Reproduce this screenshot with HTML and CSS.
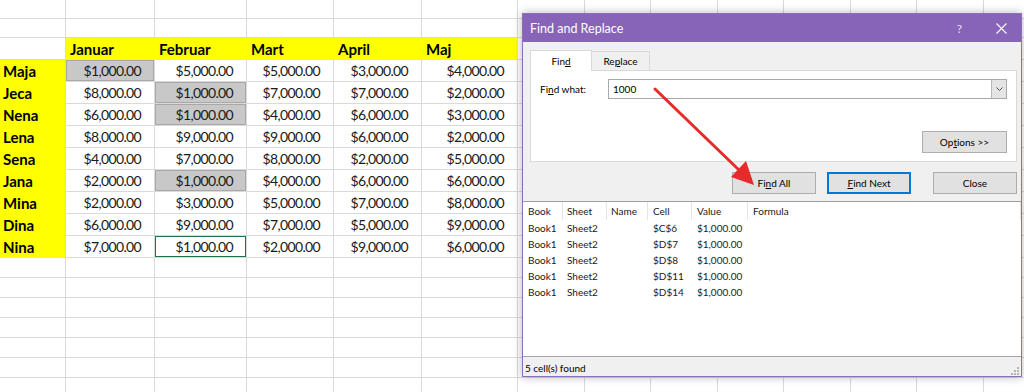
FILE: index.html
```html
<!DOCTYPE html>
<html>
<head>
<meta charset="utf-8">
<title>Find and Replace</title>
<link rel="stylesheet" href="styles.css">
</head>
<body>
<div class="sheet">
<table class="grid">
<colgroup>
<col class="c-a"><col class="c-b"><col class="c-c"><col class="c-d"><col class="c-e"><col class="c-f">
<col class="c-x"><col class="c-x"><col class="c-x"><col class="c-x"><col class="c-x"><col class="c-x"><col class="c-x"><col class="c-x">
</colgroup>
<tr class="r-top"><td></td><td></td><td></td><td></td><td></td><td></td><td></td><td></td><td></td><td></td><td></td><td></td><td></td><td></td></tr>
<tr class="r-top"><td></td><td></td><td></td><td></td><td></td><td></td><td></td><td></td><td></td><td></td><td></td><td></td><td></td><td></td></tr>
<tr class="r-data"><td></td><td class="head">Januar</td><td class="head">Februar</td><td class="head">Mart</td><td class="head">April</td><td class="head">Maj</td><td></td><td></td><td></td><td></td><td></td><td></td><td></td><td></td></tr>
<tr class="r-data"><td class="name">Maja</td><td class="val found">$1,000.00</td><td class="val">$5,000.00</td><td class="val">$5,000.00</td><td class="val">$3,000.00</td><td class="val">$4,000.00</td><td></td><td></td><td></td><td></td><td></td><td></td><td></td><td></td></tr>
<tr class="r-data"><td class="name">Jeca</td><td class="val">$8,000.00</td><td class="val found">$1,000.00</td><td class="val">$7,000.00</td><td class="val">$7,000.00</td><td class="val">$2,000.00</td><td></td><td></td><td></td><td></td><td></td><td></td><td></td><td></td></tr>
<tr class="r-data"><td class="name">Nena</td><td class="val">$6,000.00</td><td class="val found">$1,000.00</td><td class="val">$4,000.00</td><td class="val">$6,000.00</td><td class="val">$3,000.00</td><td></td><td></td><td></td><td></td><td></td><td></td><td></td><td></td></tr>
<tr class="r-data"><td class="name">Lena</td><td class="val">$8,000.00</td><td class="val">$9,000.00</td><td class="val">$9,000.00</td><td class="val">$6,000.00</td><td class="val">$2,000.00</td><td></td><td></td><td></td><td></td><td></td><td></td><td></td><td></td></tr>
<tr class="r-data"><td class="name">Sena</td><td class="val">$4,000.00</td><td class="val">$7,000.00</td><td class="val">$8,000.00</td><td class="val">$2,000.00</td><td class="val">$5,000.00</td><td></td><td></td><td></td><td></td><td></td><td></td><td></td><td></td></tr>
<tr class="r-data"><td class="name">Jana</td><td class="val">$2,000.00</td><td class="val found">$1,000.00</td><td class="val">$4,000.00</td><td class="val">$6,000.00</td><td class="val">$6,000.00</td><td></td><td></td><td></td><td></td><td></td><td></td><td></td><td></td></tr>
<tr class="r-data"><td class="name">Mina</td><td class="val">$2,000.00</td><td class="val">$3,000.00</td><td class="val">$5,000.00</td><td class="val">$7,000.00</td><td class="val">$8,000.00</td><td></td><td></td><td></td><td></td><td></td><td></td><td></td><td></td></tr>
<tr class="r-data"><td class="name">Dina</td><td class="val">$6,000.00</td><td class="val">$9,000.00</td><td class="val">$7,000.00</td><td class="val">$5,000.00</td><td class="val">$9,000.00</td><td></td><td></td><td></td><td></td><td></td><td></td><td></td><td></td></tr>
<tr class="r-data"><td class="name">Nina</td><td class="val">$7,000.00</td><td class="val active">$1,000.00</td><td class="val">$2,000.00</td><td class="val">$9,000.00</td><td class="val">$6,000.00</td><td></td><td></td><td></td><td></td><td></td><td></td><td></td><td></td></tr>
<tr class="r-empty"><td></td><td></td><td></td><td></td><td></td><td></td><td></td><td></td><td></td><td></td><td></td><td></td><td></td><td></td></tr>
<tr class="r-empty"><td></td><td></td><td></td><td></td><td></td><td></td><td></td><td></td><td></td><td></td><td></td><td></td><td></td><td></td></tr>
<tr class="r-empty"><td></td><td></td><td></td><td></td><td></td><td></td><td></td><td></td><td></td><td></td><td></td><td></td><td></td><td></td></tr>
<tr class="r-empty"><td></td><td></td><td></td><td></td><td></td><td></td><td></td><td></td><td></td><td></td><td></td><td></td><td></td><td></td></tr>
<tr class="r-empty"><td></td><td></td><td></td><td></td><td></td><td></td><td></td><td></td><td></td><td></td><td></td><td></td><td></td><td></td></tr>
<tr class="r-empty"><td></td><td></td><td></td><td></td><td></td><td></td><td></td><td></td><td></td><td></td><td></td><td></td><td></td><td></td></tr>
<tr class="r-empty"><td></td><td></td><td></td><td></td><td></td><td></td><td></td><td></td><td></td><td></td><td></td><td></td><td></td><td></td></tr>
</table>
</div>

<div class="dialog">
  <div class="titlebar">
    <span class="title">Find and Replace</span>
    <span class="cap-btn help">?</span>
    <span class="cap-btn close"><svg width="11" height="11" viewBox="0 0 11 11"><path d="M0.5 0.5 L10.5 10.5 M10.5 0.5 L0.5 10.5" stroke="#fff" stroke-width="1.1" fill="none"/></svg></span>
  </div>
  <div class="body">
    <div class="tabs">
      <div class="tab active">Fin<u>d</u></div>
      <div class="tab">Re<u>p</u>lace</div>
    </div>
    <div class="panel">
      <div class="field-row">
        <span class="label">Fi<u>n</u>d what:</span>
        <div class="combo">
          <span class="combo-text">1000</span>
          <span class="drop"><svg width="7" height="4" viewBox="0 0 7 4"><path d="M0.5 0.5 L3.5 3.5 L6.5 0.5" stroke="#555" stroke-width="1" fill="none"/></svg></span>
        </div>
      </div>
      <div class="options-row">
        <span class="btn options">Op<u>t</u>ions &gt;&gt;</span>
      </div>
    </div>
    <div class="actions">
      <span class="btn">Fi<u>n</u>d All</span>
      <span class="btn focused"><u>F</u>ind Next</span>
      <span class="btn close-btn">Close</span>
    </div>
  </div>
  <div class="results">
    <div class="rrow rhead">
      <span>Book</span><span>Sheet</span><span>Name</span><span>Cell</span><span>Value</span><span>Formula</span>
    </div>
    <div class="rrow"><span>Book1</span><span>Sheet2</span><span></span><span>$C$6</span><span>$1,000.00</span><span></span></div>
    <div class="rrow"><span>Book1</span><span>Sheet2</span><span></span><span>$D$7</span><span>$1,000.00</span><span></span></div>
    <div class="rrow"><span>Book1</span><span>Sheet2</span><span></span><span>$D$8</span><span>$1,000.00</span><span></span></div>
    <div class="rrow"><span>Book1</span><span>Sheet2</span><span></span><span>$D$11</span><span>$1,000.00</span><span></span></div>
    <div class="rrow"><span>Book1</span><span>Sheet2</span><span></span><span>$D$14</span><span>$1,000.00</span><span></span></div>
  </div>
  <div class="status">
    <span>5 cell(s) found</span>
    <svg class="grip" width="9" height="9" viewBox="0 0 9 9"><g fill="#b5b5b5"><rect x="7" y="1" width="2" height="2"/><rect x="4" y="4" width="2" height="2"/><rect x="7" y="4" width="2" height="2"/><rect x="1" y="7" width="2" height="2"/><rect x="4" y="7" width="2" height="2"/><rect x="7" y="7" width="2" height="2"/></g></svg>
  </div>
</div>

<svg class="arrow" width="1024" height="392" viewBox="0 0 1024 392">
  <line x1="655" y1="89" x2="739" y2="170" stroke="#e52b2b" stroke-width="3" stroke-linecap="round"/>
  <polygon points="754,185 731,177 746,161" fill="#e52b2b"/>
</svg>
</body>
</html>
```

FILE: styles.css
```css
html, body {
  margin: 0;
  padding: 0;
}
body {
  width: 1024px;
  height: 392px;
  overflow: hidden;
  position: relative;
  background: #ffffff;
  font-family: Lato, "Liberation Sans", sans-serif;
}

/* ---------- spreadsheet ---------- */
.sheet {
  width: 1024px;
  height: 392px;
  overflow: hidden;
}
.grid {
  border-collapse: separate;
  border-spacing: 0;
  table-layout: fixed;
  width: 1050px;
}
.c-a { width: 66px; }
.c-b { width: 89px; }
.c-c { width: 92px; }
.c-d { width: 87px; }
.c-e { width: 88px; }
.c-f { width: 96px; }
.c-x { width: 66.5px; }

.grid td {
  box-sizing: border-box;
  padding: 0;
  border-right: 1px solid #dadada;
  border-bottom: 1px solid #dadada;
  white-space: nowrap;
  overflow: hidden;
  vertical-align: middle;
}
.r-top { height: 19px; }
.r-data { height: 22px; }
.r-empty { height: 20px; }

.grid td.head {
  background: #ffff00;
  border-color: #ffff00;
  font-weight: 700;
  font-size: 15px;
  padding-left: 4px;
  color: #000;
}
.grid td.name {
  background: #ffff00;
  border-bottom-color: #ffff00;
  font-weight: 700;
  font-size: 15px;
  padding-left: 3px;
  color: #000;
}
.grid td.val {
  text-align: right;
  padding-right: 13px;
  font-size: 14px;
  letter-spacing: -0.65px;
  color: #1a1a1a;
}
.grid td.found {
  background: #c8c8c8;
  box-shadow: inset 0 0 0 1px #a8a8a8;
}
.grid td.active {
  box-shadow: inset 0 0 0 1px #217346;
}

/* ---------- dialog ---------- */
.dialog {
  position: absolute;
  left: 522px;
  top: 13px;
  width: 500px;
  height: 364px;
  box-sizing: border-box;
  border: 1px solid #8c6fbb;
  background: #f0f0f0;
  display: flex;
  flex-direction: column;
  box-shadow: 0 0 9px rgba(0, 0, 0, 0.28);
  font-size: 10px;
  color: #000;
}
.titlebar {
  height: 28px;
  flex: none;
  background: #8764b8;
  color: #ffffff;
  display: flex;
  align-items: center;
  padding-left: 7px;
}
.title {
  flex: 1;
  font-size: 12.5px;
}
.cap-btn {
  height: 28px;
  display: flex;
  align-items: center;
  justify-content: center;
}
.help {
  width: 43px;
  font-size: 12px;
  color: #e8e0f2;
}
.close {
  width: 40px;
}

.body {
  padding: 7px 4px 0 7px;
  flex: none;
}
.tabs {
  display: flex;
  align-items: flex-end;
  height: 21px;
}
.tab {
  box-sizing: border-box;
  height: 19px;
  width: 58px;
  display: flex;
  align-items: center;
  justify-content: center;
  border: 1px solid #d9d9d9;
  border-bottom: none;
  border-left: none;
  background: #f0f0f0;
}
.tab.active {
  height: 21px;
  width: 62px;
  background: #ffffff;
  border-left: 1px solid #d9d9d9;
  position: relative;
  top: 1px;
}
.panel {
  box-sizing: border-box;
  height: 92px;
  background: #ffffff;
  border: 1px solid #d9d9d9;
  padding: 8px 9px 8px 9px;
  display: flex;
  flex-direction: column;
  justify-content: space-between;
}
.field-row {
  display: flex;
  align-items: center;
  height: 20px;
}
.label {
  width: 68px;
  flex: none;
}
.combo {
  flex: 1;
  box-sizing: border-box;
  height: 20px;
  border: 1px solid #a9a9a9;
  display: flex;
  align-items: center;
}
.combo-text {
  flex: 1;
  padding-left: 4px;
}
.drop {
  width: 15px;
  height: 18px;
  box-sizing: border-box;
  background: #e4e4e4;
  border-left: 1px solid #b8b8b8;
  display: flex;
  align-items: center;
  justify-content: center;
}
.options-row {
  display: flex;
  justify-content: flex-end;
}
.btn {
  box-sizing: border-box;
  width: 84px;
  height: 22px;
  background: #e1e1e1;
  border: 1px solid #adadad;
  display: flex;
  align-items: center;
  justify-content: center;
}
.btn.options {
  width: 85px;
}
.btn.focused {
  border-color: #0078d7;
  box-shadow: inset 0 0 0 1px #0078d7;
}
.actions {
  display: flex;
  justify-content: flex-end;
  margin-top: 10px;
}
.actions .btn + .btn {
  margin-left: 11px;
}
.actions .btn.close-btn {
  margin-left: 22px;
}

.results {
  margin-top: 7px;
  flex: 1;
  background: #ffffff;
  border-top: 1px solid #a0a0a0;
  border-bottom: 1px solid #a5a0ae;
  color: #1a1a1a;
}
.rrow {
  display: grid;
  grid-template-columns: 40px 44px 41px 44px 56px 1fr;
  height: 16px;
  align-items: center;
}
.rrow span {
  padding-left: 5px;
  white-space: nowrap;
}
.rrow span:nth-child(2),
.rrow span:nth-child(3) {
  padding-left: 4px;
}
.rhead {
  height: 18px;
  align-items: stretch;
}
.rhead span {
  display: flex;
  align-items: center;
  border-right: 1px solid #e5e5e5;
}
.status {
  height: 19px;
  flex: none;
  display: flex;
  align-items: center;
  justify-content: space-between;
  padding: 2px 2px 0 2px;
  box-sizing: border-box;
}
.grip {
  align-self: flex-end;
  margin-bottom: 1px;
}

.arrow {
  position: absolute;
  left: 0;
  top: 0;
  pointer-events: none;
}
```
